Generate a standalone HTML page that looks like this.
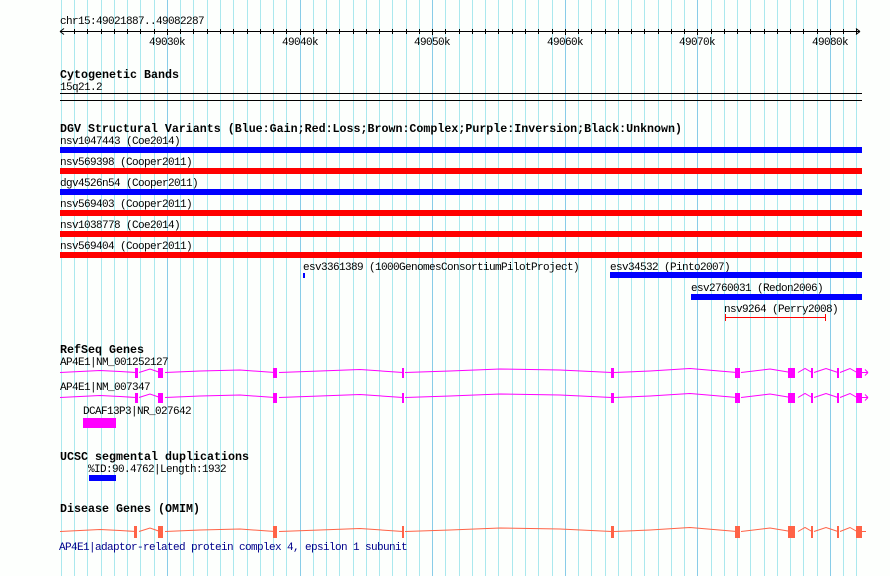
<!DOCTYPE html>
<html><head><meta charset="utf-8"><style>
html,body{margin:0;padding:0;background:#fff;}
svg{display:block;}
text{font-family:"Liberation Mono","DejaVu Sans Mono",monospace;font-size:11px;letter-spacing:-0.6px;fill:#000;}
.t{font-weight:bold;font-size:11.5px;letter-spacing:0;}
</style></head><body>
<svg width="890" height="576" viewBox="0 0 890 576" xmlns="http://www.w3.org/2000/svg">
<rect width="890" height="576" fill="#fdfffd"/>
<g stroke="#aae8ee" stroke-width="1">
<path d="M61.5 0V576M74.5 0V576M87.5 0V576M101.5 0V576M114.5 0V576M127.5 0V576M140.5 0V576M154.5 0V576M180.5 0V576M193.5 0V576M207.5 0V576M220.5 0V576M233.5 0V576M247.5 0V576M260.5 0V576M273.5 0V576M286.5 0V576M313.5 0V576M326.5 0V576M339.5 0V576M353.5 0V576M366.5 0V576M379.5 0V576M392.5 0V576M406.5 0V576M419.5 0V576M445.5 0V576M459.5 0V576M472.5 0V576M485.5 0V576M498.5 0V576M512.5 0V576M525.5 0V576M538.5 0V576M552.5 0V576M578.5 0V576M591.5 0V576M605.5 0V576M618.5 0V576M631.5 0V576M644.5 0V576M658.5 0V576M671.5 0V576M684.5 0V576M711.5 0V576M724.5 0V576M737.5 0V576M750.5 0V576M764.5 0V576M777.5 0V576M790.5 0V576M803.5 0V576M817.5 0V576M843.5 0V576M856.5 0V576"/>
</g>
<g stroke="#88cce8" stroke-width="1">
<path d="M167.5 0V576M300.5 0V576M432.5 0V576M565.5 0V576M697.5 0V576M830.5 0V576"/>
</g>
<!-- ruler -->
<text x="60" y="24" textLength="144" lengthAdjust="spacingAndGlyphs">chr15:49021887..49082287</text>
<g stroke="#000" stroke-width="1" fill="none">
<path d="M60 31.5H860M60 31.5l4 -3M60 31.5l4 3M860 31.5l-4 -3M860 31.5l-4 3"/>
<path d="M74.5 29V34M87.5 29V34M101.5 29V34M114.5 29V34M127.5 29V34M140.5 29V34M154.5 29V34M167.5 29V35M180.5 29V34M193.5 29V34M207.5 29V34M220.5 29V34M233.5 29V34M247.5 29V34M260.5 29V34M273.5 29V34M286.5 29V34M300.5 29V35M313.5 29V34M326.5 29V34M339.5 29V34M353.5 29V34M366.5 29V34M379.5 29V34M392.5 29V34M406.5 29V34M419.5 29V34M432.5 29V35M445.5 29V34M459.5 29V34M472.5 29V34M485.5 29V34M498.5 29V34M512.5 29V34M525.5 29V34M538.5 29V34M552.5 29V34M565.5 29V35M578.5 29V34M591.5 29V34M605.5 29V34M618.5 29V34M631.5 29V34M644.5 29V34M658.5 29V34M671.5 29V34M684.5 29V34M697.5 29V35M711.5 29V34M724.5 29V34M737.5 29V34M750.5 29V34M764.5 29V34M777.5 29V34M790.5 29V34M803.5 29V34M817.5 29V34M830.5 29V35M843.5 29V34M856.5 29V34"/>
</g>
<g text-anchor="middle">
<text x="167" y="45">49030k</text><text x="300" y="45">49040k</text><text x="432" y="45">49050k</text><text x="565" y="45">49060k</text><text x="697" y="45">49070k</text><text x="830" y="45">49080k</text>
</g>
<!-- cytoband -->
<text class="t" x="60" y="78" textLength="119" lengthAdjust="spacingAndGlyphs">Cytogenetic Bands</text>
<text x="60" y="90">15q21.2</text>
<rect x="60" y="93" width="802" height="1" fill="#000"/>
<rect x="60" y="100" width="802" height="1" fill="#000"/>
<!-- DGV -->
<text class="t" x="60" y="132" textLength="622" lengthAdjust="spacingAndGlyphs">DGV Structural Variants (Blue:Gain;Red:Loss;Brown:Complex;Purple:Inversion;Black:Unknown)</text>
<text x="60" y="144">nsv1047443 (Coe2014)</text>
<rect x="60" y="147" width="802" height="6" fill="#0000ff"/>
<text x="60" y="165">nsv569398 (Cooper2011)</text>
<rect x="60" y="168" width="802" height="6" fill="#ff0000"/>
<text x="60" y="186">dgv4526n54 (Cooper2011)</text>
<rect x="60" y="189" width="802" height="6" fill="#0000ff"/>
<text x="60" y="207">nsv569403 (Cooper2011)</text>
<rect x="60" y="210" width="802" height="6" fill="#ff0000"/>
<text x="60" y="228">nsv1038778 (Coe2014)</text>
<rect x="60" y="231" width="802" height="6" fill="#ff0000"/>
<text x="60" y="249">nsv569404 (Cooper2011)</text>
<rect x="60" y="252" width="802" height="6" fill="#ff0000"/>
<text x="303" y="270">esv3361389 (1000GenomesConsortiumPilotProject)</text>
<rect x="303" y="273" width="2" height="5" fill="#0000ff"/>
<text x="610" y="270">esv34532 (Pinto2007)</text>
<rect x="610" y="272" width="252" height="6" fill="#0000ff"/>
<text x="691" y="291">esv2760031 (Redon2006)</text>
<rect x="691" y="294" width="171" height="6" fill="#0000ff"/>
<text x="724" y="312">nsv9264 (Perry2008)</text>
<path d="M725 317.5H826M725.5 314V321M825.5 314V321" stroke="#ff0000" stroke-width="1"/>
<!-- RefSeq -->
<text class="t" x="60" y="353" textLength="84" lengthAdjust="spacingAndGlyphs">RefSeq Genes</text>
<text x="60" y="365">AP4E1|NM_001252127</text>
<g id="g1" fill="#ff00ff">
<path d="M60 372.5L80 371.5L100 370.5L120 371.5L136 372.5M139 372.5L150 369L160 372.5M165 372.5L200 371L240 370L275 372.5M279 372.5L320 371L360 369.5L403 372.5M405 372.5L450 371L500 369L560 370L612 372.5M614 372.5L650 371L690 368.5L737 372.5M741 372.5L770 369L791 372.5M798 372.5L805 368.5L812 372.5M814 372.5L826 368.5L838 372.5M840 372.5L850 368.5L857 372.5M862 372.5H868M868 372.5l-3 -3M868 372.5l-3 3" stroke="#ff00ff" fill="none"/>
<rect x="135" y="368" width="3" height="10"/><rect x="158" y="368" width="5" height="10"/><rect x="273" y="368" width="4" height="10"/><rect x="402" y="368" width="2" height="10"/><rect x="611" y="368" width="3" height="10"/><rect x="735" y="368" width="5" height="10"/><rect x="788" y="368" width="7" height="10"/><rect x="811" y="368" width="2" height="10"/><rect x="837" y="368" width="2" height="10"/><rect x="856" y="368" width="6" height="10"/>
</g>
<text x="60" y="390">AP4E1|NM_007347</text>
<use href="#g1" y="25"/>
<text x="83" y="414">DCAF13P3|NR_027642</text>
<rect x="83" y="418" width="33" height="10" fill="#ff00ff"/>
<!-- UCSC -->
<text class="t" x="60" y="460" textLength="189" lengthAdjust="spacingAndGlyphs">UCSC segmental duplications</text>
<text x="88" y="472">%ID:90.4762|Length:1932</text>
<rect x="89" y="475" width="27" height="6" fill="#0000ff"/>
<!-- OMIM -->
<text class="t" x="60" y="512" textLength="140" lengthAdjust="spacingAndGlyphs">Disease Genes (OMIM)</text>
<g fill="#ff6347">
<path d="M60 531.5L80 530.5L100 529.5L120 530.5L136 531.5M139 531.5L150 528L160 531.5M165 531.5L200 530L240 529L275 531.5M279 531.5L320 530L360 528.5L403 531.5M405 531.5L450 530L500 528L560 529L612 531.5M614 531.5L650 530L690 527.5L737 531.5M741 531.5L770 528L791 531.5M798 531.5L805 527.5L812 531.5M814 531.5L826 527.5L838 531.5M840 531.5L850 527.5L857 531.5M862 531.5H866" stroke="#ff6347" fill="none"/>
<rect x="134" y="526" width="3" height="12"/><rect x="158" y="526" width="5" height="12"/><rect x="273" y="526" width="4" height="12"/><rect x="402" y="526" width="2" height="12"/><rect x="611" y="526" width="3" height="12"/><rect x="735" y="526" width="5" height="12"/><rect x="788" y="526" width="7" height="12"/><rect x="811" y="526" width="2" height="12"/><rect x="837" y="526" width="2" height="12"/><rect x="856" y="526" width="6" height="12"/>
</g>
<text x="59" y="550" style="fill:#00008b">AP4E1|adaptor-related protein complex 4, epsilon 1 subunit</text>
</svg>
</body></html>
